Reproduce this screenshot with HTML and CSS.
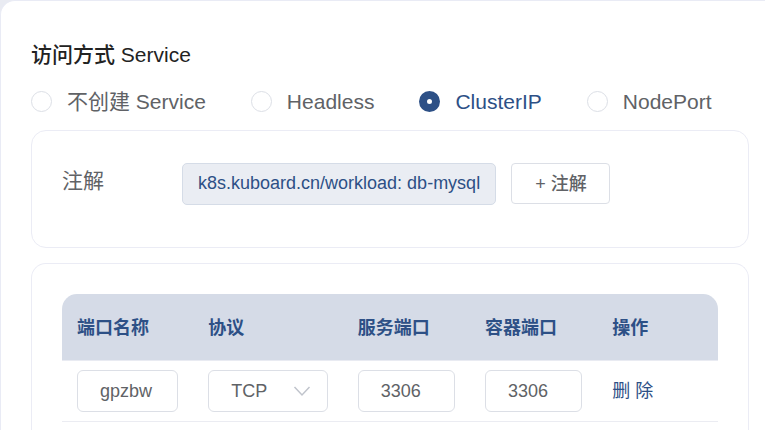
FILE: index.html
```html
<!DOCTYPE html>
<html lang="zh-CN">
<head>
    <meta charset="UTF-8">
    <meta name="viewport" content="width=device-width, initial-scale=1.0">
    <title>访问方式 Service</title>
    <link rel="stylesheet" href="styles.css">
</head>
<body>
    <form class="panel">
        <h1 class="title">访问方式 Service</h1>

        <div class="radio-group">
            <label class="radio"><input type="radio" name="serviceType" value="none"><span>不创建 Service</span></label>
            <label class="radio"><input type="radio" name="serviceType" value="headless"><span>Headless</span></label>
            <label class="radio"><input type="radio" name="serviceType" value="clusterip" checked><span>ClusterIP</span></label>
            <label class="radio"><input type="radio" name="serviceType" value="nodeport"><span>NodePort</span></label>
        </div>

        <section class="card annotations">
            <div class="card-label">注解</div>
            <div class="tags">
                <span class="tag">k8s.kuboard.cn/workload: db-mysql</span>
                <button type="button" class="add-btn">+ 注解</button>
            </div>
        </section>

        <section class="card ports">
            <table class="port-table">
                <colgroup>
                    <col class="col-name">
                    <col class="col-protocol">
                    <col class="col-port">
                    <col class="col-port">
                    <col class="col-action">
                </colgroup>
                <thead>
                    <tr>
                        <th>端口名称</th>
                        <th>协议</th>
                        <th>服务端口</th>
                        <th>容器端口</th>
                        <th>操作</th>
                    </tr>
                </thead>
                <tbody>
                    <tr>
                        <td><input class="field" type="text" aria-label="端口名称" value="gpzbw"></td>
                        <td>
                            <div class="select-wrap">
                                <select class="field" aria-label="协议">
                                    <option selected>TCP</option>
                                    <option>UDP</option>
                                </select>
                                <svg class="arrow" viewBox="0 0 18 18" aria-hidden="true">
                                    <path d="M1.5 5 L9 13 L16.5 5" fill="none" stroke="#c0c4cc" stroke-width="1.5"/>
                                </svg>
                            </div>
                        </td>
                        <td><input class="field" type="text" inputmode="numeric" aria-label="服务端口" value="3306"></td>
                        <td><input class="field" type="text" inputmode="numeric" aria-label="容器端口" value="3306"></td>
                        <td><button type="button" class="link-btn">删 除</button></td>
                    </tr>
                </tbody>
            </table>
        </section>
    </form>
</body>
</html>
```
FILE: styles.css
```css
* {
    box-sizing: border-box;
}
body {
    margin: 0;
    height: 100vh;
    overflow: hidden;
    background-color: #e9ebf2;
    color: #606266;
    font-family: "Liberation Sans", "Noto Sans CJK SC", sans-serif;
    font-size: 18px;
}
button, input, select {
    font: inherit;
    color: inherit;
}
.panel {
    display: flex;
    flex-direction: column;
    height: 100%;
    padding: 38px 16px 0 30px;
    background: #fff;
    border: 1px solid #e9ebf5;
    border-width: 1px 0 0 1px;
    border-radius: 15px 0 0 0;
}
.title {
    margin: 0 0 15px;
    color: #222;
    font-size: 21px;
    font-weight: 500;
    line-height: 32px;
}
.radio-group {
    display: flex;
    gap: 45px;
    margin-bottom: 13px;
    font-size: 21px;
    line-height: 31px;
}
.radio {
    display: flex;
    align-items: center;
    gap: 15px;
    white-space: nowrap;
    cursor: pointer;
}
.radio input {
    appearance: none;
    width: 21px;
    height: 21px;
    margin: 0;
    border: 1px solid #dcdfe6;
    border-radius: 50%;
    background: #fff;
}
.radio input:checked {
    border: 8px solid #2d5086;
    background: #fff;
}
.radio input:checked + span {
    color: #2d5086;
}
.card {
    border: 1px solid #ebecf5;
    border-radius: 15px;
}
.annotations {
    display: flex;
    align-items: flex-start;
    margin-bottom: 15px;
    padding: 32px 30px 42px;
}
.card-label {
    width: 120px;
    font-size: 21px;
    line-height: 36px;
}
.tags {
    display: flex;
    gap: 15px;
}
.tag {
    height: 42px;
    padding: 0 15px;
    background: #eaedf3;
    border: 1px solid #d5dce7;
    border-radius: 5px;
    color: #2d5086;
    line-height: 38px;
    white-space: nowrap;
}
.add-btn {
    height: 41px;
    padding: 0 22px 4px 23px;
    background: #fff;
    border: 1px solid #dcdfe6;
    border-radius: 4px;
    font-weight: 500;
    white-space: nowrap;
    cursor: pointer;
}
.ports {
    flex: 1;
    padding: 30px 30px 0;
    border-bottom: none;
    border-radius: 15px 15px 0 0;
}
.port-table {
    width: 100%;
    border-spacing: 0;
    table-layout: fixed;
}
.col-name {
    width: 20%;
}
.col-protocol {
    width: 22.8%;
}
.col-port {
    width: 19.4%;
}
.port-table th {
    height: 67px;
    padding: 0 15px 2px;
    background: #d5dbe7;
    border-bottom: 1px solid #e9ebf2;
    color: #2d5086;
    text-align: left;
}
.port-table th:first-child {
    border-top-left-radius: 15px;
}
.port-table th:last-child {
    border-top-right-radius: 15px;
}
.port-table td {
    padding: 9px 15px;
    border-bottom: 1px solid #ebecf2;
}
.field {
    display: block;
    width: 100%;
    height: 42px;
    padding: 0 22px;
    appearance: none;
    background: #fff;
    border: 1px solid #dcdfe6;
    border-radius: 6px;
}
.select-wrap {
    position: relative;
}
.arrow {
    position: absolute;
    top: 12px;
    right: 17px;
    width: 18px;
    height: 18px;
    pointer-events: none;
}
.link-btn {
    padding: 0 0 4px;
    background: none;
    border: none;
    color: #2d5086;
    cursor: pointer;
}
```
